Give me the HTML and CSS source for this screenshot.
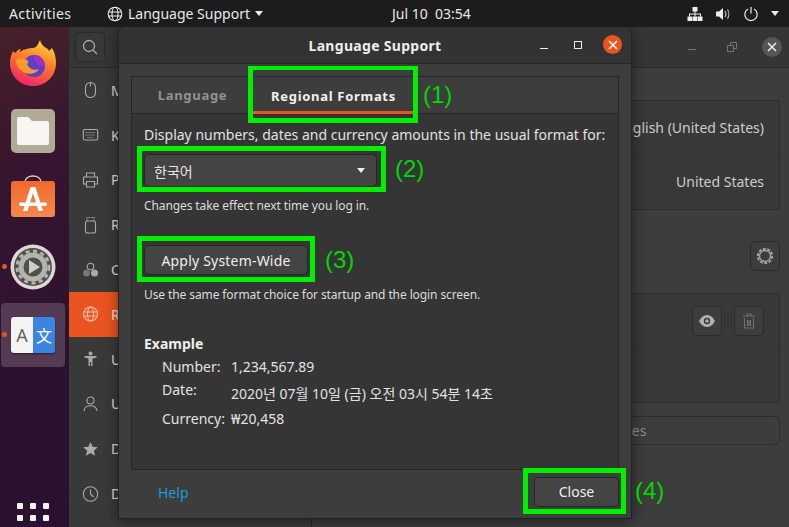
FILE: index.html
```html
<!DOCTYPE html>
<html>

<head>
    <meta charset="UTF-8">
    <title>Language Support</title>
    <link rel="stylesheet" href="styles.css">
</head>

<body>
    <header class="topbar">
        <span class="top-activities">Activities</span>
        <div class="top-app">
            <svg width="16" height="16" viewBox="0 0 16 16" fill="none" stroke="#eee" stroke-width="1.1">
                <circle cx="8" cy="8" r="6.8" />
                <ellipse cx="8" cy="8" rx="3" ry="6.8" />
                <path d="M1.400 6h13.200M1.400 10h13.200" />
            </svg>
            <span>Language Support</span>
            <i class="caret"></i>
        </div>
        <span class="top-clock">Jul 10&nbsp; 03:54</span>
        <div class="top-tray">
            <svg width="16" height="16" viewBox="0 0 16 16" fill="#eee">
                <path d="M5.500 1h5v4.500h-5zM0.500 10.500h4.500v4.500h-4.500zM5.500 10.500h5v4.500h-5zM11 10.500h4.500v4.500H11z" />
                <path d="M7.500 5h1v2.500h5.500v3h-1V8.500H8.500v2h-1v-2H3v2H2v-3h5.500z" />
            </svg>
            <svg width="16" height="16" viewBox="0 0 16 16" fill="#eee">
                <path d="M1 5.500h3L8 2v12L4 10.500H1z" />
                <path d="M10 5c1 1.600 1 4.400 0 6M12.500 3.500c1.700 2.500 1.700 6.500 0 9" fill="none" stroke="#bbb" stroke-width="1.200" />
            </svg>
            <svg width="16" height="16" viewBox="0 0 16 16" fill="none" stroke="#eee" stroke-width="1.200">
                <path d="M5 3a6.200 6.200 0 1 0 6 0M8 1v6.500" />
            </svg>
            <i class="caret"></i>
        </div>
    </header>

    <main class="desktop">
        <nav class="dock">
            <div class="dock-item">
                <svg width="46" height="46" viewBox="0 0 46 46">
                    <defs>
                        <linearGradient id="fox" x1="0.7" y1="0" x2="0.3" y2="1">
                            <stop offset="0" stop-color="#ffd53a" />
                            <stop offset="0.45" stop-color="#ff7a2a" />
                            <stop offset="1" stop-color="#f0206a" />
                        </linearGradient>
                    </defs>
                    <path d="M30 0c1 4 3 6 6 8 1 0 2 1 3 3 1-1 2-2 3-3 3 5 4 10 4 15 0 13-10 23-23 23S0 36 0 23c0-4 1-8 3-12l2 2c2-2 4-4 6-4-1 1-1 2-1 3 4-3 9-4 13-4 3 0 5-3 7-8z" fill="url(#fox)" />
                    <circle cx="24" cy="26" r="11" fill="#5a3fcb" />
                    <path d="M24 15c6 0 11 5 11 11h-7c0-3-2-5-4-5z" fill="#a32fc0" />
                    <path d="M6 20c3-3 7-2 11 0 2 1 2 3 0 4 2 5 7 7 12 5-4 6-12 6-17 2-4-3-6-7-6-11z" fill="#ff9a2a" />
                </svg>
            </div>
            <div class="dock-item">
                <div class="files-tile">
                    <svg width="34" height="34" viewBox="0 0 34 34">
                        <path d="M1 5a2 2 0 0 1 2-2h9l4 4h15a2 2 0 0 1 2 2v20a2 2 0 0 1-2 2H3a2 2 0 0 1-2-2z" fill="#f7f6f3" />
                    </svg>
                </div>
            </div>
            <div class="dock-item">
                <svg width="46" height="48" viewBox="0 0 46 48">
                    <defs>
                        <linearGradient id="bag" x1="0" y1="0" x2="0" y2="1">
                            <stop offset="0" stop-color="#f2682a" />
                            <stop offset="1" stop-color="#f58850" />
                        </linearGradient>
                    </defs>
                    <path d="M15 7c0-8 16-8 16 0" fill="none" stroke="#eec9a8" stroke-width="1.500" />
                    <rect x="1" y="6" width="44" height="36" rx="3" fill="url(#bag)" />
                    <path d="M20.500 12h5L33 36h-4.500l-5.500-18-5.500 18H13z" fill="#fff" />
                    <rect x="9" y="27.500" width="28" height="3.500" rx="1.700" fill="#fff" />
                </svg>
            </div>
            <div class="dock-item has-dot">
                <svg width="46" height="46" viewBox="0 0 46 46">
                    <circle cx="23" cy="23" r="22.500" fill="#ddd9d2" />
                    <circle cx="23" cy="23" r="19" fill="#504f4d" />
                    <circle cx="23" cy="23" r="12" fill="none" stroke="#b5b3ae" stroke-width="5" />
                    <circle cx="23" cy="23" r="16" fill="none" stroke="#b5b3ae" stroke-width="3" stroke-dasharray="4 3.500" />
                    <path d="M19 16l11 7-11 7z" fill="#cfcdc8" />
                </svg>
            </div>
            <div class="dock-item has-dot is-current">
                <div class="lang-tile">
                    <span class="lang-a">A</span>
                    <span class="lang-zh">文</span>
                </div>
            </div>
            <div class="dock-apps">
                <i></i><i></i><i></i><i></i><i></i><i></i>
            </div>
        </nav>

        <section class="settings">
            <aside class="side">
                <div class="side-head">
                    <button class="icon-btn">
                        <svg width="16" height="16" viewBox="0 0 16 16" fill="none" stroke="#aaa" stroke-width="1.300">
                            <circle cx="7" cy="7" r="5.500" />
                            <path d="M11 11l4 4" />
                        </svg>
                    </button>
                </div>
                <div class="side-row">
                    <svg class="side-icon" width="16" height="18" viewBox="0 0 16 18" fill="none" stroke="#aaa" stroke-width="1.100">
                        <rect x="3" y="1.500" width="10" height="15" rx="5" />
                        <path d="M8 1.500v4" />
                    </svg>
                    <span>Mouse &amp; Touchpad</span>
                </div>
                <div class="side-row">
                    <svg class="side-icon" width="16" height="14" viewBox="0 0 16 14" fill="none" stroke="#aaa" stroke-width="1.100">
                        <rect x="0.800" y="1.500" width="14.400" height="10.500" rx="1.500" />
                        <path d="M3 4.500h10M3 7h10M5 9.500h6" stroke-dasharray="1 1" />
                    </svg>
                    <span>Keyboard Shortcuts</span>
                </div>
                <div class="side-row">
                    <svg class="side-icon" width="16" height="16" viewBox="0 0 16 16" fill="none" stroke="#aaa" stroke-width="1.100">
                        <path d="M4 5V1h8v4M4 12H1V5h14v7h-3" />
                        <path d="M4 9.500h8V15H4z" />
                    </svg>
                    <span>Printers</span>
                </div>
                <div class="side-row">
                    <svg class="side-icon" width="16" height="18" viewBox="0 0 16 18" fill="none" stroke="#aaa" stroke-width="1.100">
                        <rect x="3" y="5" width="10" height="12" rx="2" />
                        <path d="M4.500 5V1.500h7V5" stroke-dasharray="1.500 1" />
                    </svg>
                    <span>Removable Media</span>
                </div>
                <div class="side-row">
                    <svg class="side-icon" width="16" height="16" viewBox="0 0 16 16" fill="#aaa">
                        <circle cx="8" cy="4.500" r="3.200" fill="none" stroke="#aaa" stroke-width="1.100" />
                        <circle cx="4" cy="11" r="3.500" fill="#777" />
                        <circle cx="12" cy="11" r="3.500" />
                    </svg>
                    <span>Color</span>
                </div>
                <div class="side-row is-active">
                    <svg class="side-icon" width="16" height="16" viewBox="0 0 16 16" fill="none" stroke="#f3c4ac" stroke-width="1.100">
                        <circle cx="8" cy="8" r="7" />
                        <ellipse cx="8" cy="8" rx="3" ry="7" />
                        <path d="M1.200 6h13.600M1.200 10h13.600" />
                    </svg>
                    <span>Region &amp; Language</span>
                </div>
                <div class="side-row">
                    <svg class="side-icon" width="16" height="16" viewBox="0 0 16 16" fill="#aaa">
                        <circle cx="8" cy="2.500" r="2" />
                        <path d="M2 5h12v1.500l-4 1V15H8.600v-4H7.400v4H6V7.500l-4-1z" />
                    </svg>
                    <span>Universal Access</span>
                </div>
                <div class="side-row">
                    <svg class="side-icon" width="16" height="16" viewBox="0 0 16 16" fill="none" stroke="#aaa" stroke-width="1.100">
                        <circle cx="8" cy="4.500" r="3.500" />
                        <path d="M1.500 15c0-7 13-7 13 0" />
                    </svg>
                    <span>Users</span>
                </div>
                <div class="side-row">
                    <svg class="side-icon" width="16" height="16" viewBox="0 0 16 16" fill="#aaa">
                        <path d="M8 1l2.100 4.800 5.200.5-3.900 3.400 1.200 5.100L8 12.100l-4.600 2.700 1.200-5.100L.7 6.300l5.200-.5z" />
                    </svg>
                    <span>Default Applications</span>
                </div>
                <div class="side-row">
                    <svg class="side-icon" width="16" height="16" viewBox="0 0 16 16" fill="none" stroke="#aaa" stroke-width="1.100">
                        <circle cx="8" cy="8" r="7.200" />
                        <path d="M8 3.500V8l3 3" />
                    </svg>
                    <span>Date &amp; Time</span>
                </div>
            </aside>

            <div class="pane">
                <div class="pane-head">
                    <span class="win-min"></span>
                    <svg width="10" height="10" viewBox="0 0 10 10" fill="none" stroke="#777">
                        <path d="M0.500 3.500h6v6h-6zM3.500 3.500v-3h6v6h-3" />
                    </svg>
                    <span class="win-close">
                        <svg width="10" height="10" viewBox="0 0 10 10" stroke="#eee" stroke-width="1.500">
                            <path d="M1 1l8 8M9 1l-8 8" />
                        </svg>
                    </span>
                </div>
                <div class="pane-body">
                    <div class="frame">
                        <div class="pane-row"><span>Language</span><span>English (United States)</span></div>
                        <div class="pane-row"><span>Formats</span><span>United States</span></div>
                    </div>
                    <div class="pane-tools">
                        <button class="icon-btn">
                            <svg width="18" height="18" viewBox="0 0 18 18" fill="none" stroke="#a8a8a8">
                                <circle cx="9" cy="9" r="5.500" stroke-width="1.300" />
                                <circle cx="9" cy="9" r="7.200" stroke-width="1.800" stroke-dasharray="3 1.500" />
                            </svg>
                        </button>
                    </div>
                    <div class="frame">
                        <div class="pane-row input-row">
                            <span>Input Sources</span>
                            <div class="input-btns">
                                <button class="icon-btn">
                                    <svg width="16" height="12" viewBox="0 0 16 12">
                                        <path d="M0 6c4-8 12-8 16 0-4 8-12 8-16 0z" fill="#b0b0b0" />
                                        <circle cx="8" cy="6" r="3.200" fill="#3a3a3a" />
                                        <circle cx="8" cy="6" r="1.800" fill="#b0b0b0" />
                                    </svg>
                                </button>
                                <button class="icon-btn">
                                    <svg width="14" height="16" viewBox="0 0 14 16" fill="none" stroke="#707070" stroke-width="1.100">
                                        <path d="M1 3h12M5 3V1h4v2M2.500 5v10h9V5M5.500 7v6M7 7v6M8.500 7v6" />
                                    </svg>
                                </button>
                            </div>
                        </div>
                        <div class="pane-row empty-row"></div>
                    </div>
                    <div class="manage">Manage Installed Languages</div>
                </div>
            </div>
        </section>

        <section class="dialog">
            <div class="dlg-title">
                <span class="dlg-name">Language Support</span>
                <div class="dlg-btns">
                    <span class="dlg-min"></span>
                    <span class="dlg-max"></span>
                    <span class="dlg-close">
                        <svg width="10" height="10" viewBox="0 0 10 10" stroke="#fff" stroke-width="1.500">
                            <path d="M1 1l8 8M9 1l-8 8" />
                        </svg>
                    </span>
                </div>
            </div>
            <div class="notebook">
                <div class="tabs">
                    <div class="tab">Language</div>
                    <div class="tab tab-on">Regional Formats</div>
                </div>
                <div class="tab-body">
                    <p class="lead">Display numbers, dates and currency amounts in the usual format for:</p>
                    <div class="combo"><span>한국어</span><i class="caret"></i></div>
                    <p class="hint">Changes take effect next time you log in.</p>
                    <button class="btn btn-apply">Apply System-Wide</button>
                    <p class="hint hint-apply">Use the same format choice for startup and the login screen.</p>
                    <h4 class="ex-title">Example</h4>
                    <div class="ex-grid">
                        <span>Number:</span><span>1,234,567.89</span>
                        <span>Date:</span><span class="ex-date">2020년 07월 10일 (금) 오전 03시 54분 14초</span>
                        <span>Currency:</span><span>₩20,458</span>
                    </div>
                </div>
            </div>
            <div class="dlg-foot">
                <a class="help">Help</a>
                <button class="btn btn-close">Close</button>
            </div>
        </section>

        <div class="mark mark-1"></div>
        <div class="mark mark-2"></div>
        <div class="mark mark-3"></div>
        <div class="mark mark-4"></div>
        <span class="mark-no no-1">(1)</span>
        <span class="mark-no no-2">(2)</span>
        <span class="mark-no no-3">(3)</span>
        <span class="mark-no no-4">(4)</span>
    </main>
</body>

</html>
```
FILE: styles.css
```css
* {
    box-sizing: border-box;
}

html,
body {
    margin: 0;
    height: 527px;
    overflow: hidden;
}

body {
    background-color: #2c1230;
    color: #e6e6e6;
    font-family: "Noto Sans", "Noto Sans CJK KR", sans-serif;
    font-size: 14px;
}

p,
h4 {
    margin: 0;
}

button {
    font-family: inherit;
    padding: 0;
}

.caret {
    display: inline-block;
    width: 0;
    height: 0;
    border-left: 4.5px solid transparent;
    border-right: 4.5px solid transparent;
    border-top: 5px solid #eee;
}

/* top bar */
.topbar {
    height: 27px;
    background-color: #1c1c1c;
    display: flex;
    align-items: center;
    position: relative;
    padding: 0 10px 0 9px;
    color: #e8e8e8;
}

.top-activities {
    width: 98px;
    letter-spacing: 0.4px;
}

.top-app {
    display: flex;
    align-items: center;
    gap: 5px;
}

.top-clock {
    position: absolute;
    left: 392px;
}

.top-tray {
    margin-left: auto;
    display: flex;
    align-items: center;
    gap: 12px;
}

/* desktop */
.desktop {
    position: relative;
    height: 500px;
    display: flex;
    overflow: hidden;
}

.dock {
    width: 69px;
    flex: none;
    background: linear-gradient(160deg, #47202b 0, #35152f 30%, #2b1230 70%, #2a1130 100%);
    display: flex;
    flex-direction: column;
    align-items: center;
    padding: 2px 4px 0 1px;
}

.dock-item {
    width: 64px;
    height: 64px;
    margin: 2px 0;
    display: flex;
    align-items: center;
    justify-content: center;
    position: relative;
    border-radius: 4px;
}

.has-dot::before {
    content: "";
    position: absolute;
    left: 1px;
    top: 29px;
    width: 5px;
    height: 5px;
    border-radius: 50%;
    background-color: #e95420;
}

.is-current {
    background-color: #543b53;
}

.files-tile {
    width: 44px;
    height: 44px;
    border-radius: 5px;
    background-color: #b0aa97;
    display: flex;
    align-items: center;
    justify-content: center;
}

.lang-tile {
    width: 44px;
    height: 36px;
    border-radius: 3px;
    overflow: hidden;
    display: flex;
    box-shadow: 0 1px 2px #0008;
}

.lang-a,
.lang-zh {
    width: 22px;
    display: flex;
    align-items: center;
    justify-content: center;
}

.lang-a {
    background-color: #f5f4f1;
    color: #666;
    font-size: 18px;
}

.lang-zh {
    background-color: #3a85e0;
    color: #fff;
    font-size: 16px;
    font-family: "Noto Sans CJK SC", sans-serif;
}

.dock-apps {
    margin-top: 134px;
    display: grid;
    grid-template-columns: repeat(3, 6px);
    gap: 6px 7px;
}

.dock-apps i {
    width: 6px;
    height: 6px;
    border-radius: 1px;
    background-color: #f4f2f2;
}

/* settings window, mostly under the dialog */
.settings {
    flex: 1;
    display: flex;
    background-color: #3d3d3d;
    min-width: 0;
}

.side {
    width: 243px;
    flex: none;
    background-color: #393939;
    border-right: 1px solid #2a2a2a;
}

.side-head {
    height: 41px;
    padding: 5px 6px;
    border-bottom: 1px solid #2b2b2b;
    background-color: #353535;
}

.icon-btn {
    width: 30px;
    height: 30px;
    border: 1px solid #2a2a2a;
    border-radius: 5px;
    background-color: #3d3d3d;
    display: flex;
    align-items: center;
    justify-content: center;
}

.side-head .icon-btn {
    background-color: #383838;
}

.side-row {
    height: 44.8px;
    display: flex;
    align-items: center;
    color: #ddd;
}

.side-icon {
    flex: none;
    margin: 0 11px 0 12px;
    width: 19px;
}

.side-row span {
    white-space: nowrap;
}

.is-active {
    background-color: #e95420;
    color: #f6e0d5;
}

.pane {
    flex: 1;
    min-width: 0;
    display: flex;
    flex-direction: column;
}

.pane-head {
    height: 41px;
    background-color: #353535;
    border-bottom: 1px solid #2b2b2b;
    display: flex;
    align-items: center;
    justify-content: flex-end;
    padding-right: 7px;
    gap: 31px;
}

.win-min {
    width: 8px;
    height: 1px;
    margin-top: 5px;
    background-color: #777;
}

.win-close {
    width: 20px;
    height: 20px;
    margin-left: -6px;
    border-radius: 50%;
    background-color: #555;
    display: flex;
    align-items: center;
    justify-content: center;
}

.pane-body {
    padding: 32px 9px 0 19px;
    color: #ccc;
}

.frame {
    border: 1px solid #2d2d2d;
    background-color: #383838;
}

.pane-row {
    height: 54px;
    padding: 0 15px 2px;
    display: flex;
    align-items: center;
    justify-content: space-between;
}

.pane-row + .pane-row {
    border-top: 1px solid #333;
}

.pane-tools {
    display: flex;
    justify-content: flex-end;
    margin: 31px 0 22px;
}

.input-row {
    padding-bottom: 0;
}

.input-btns {
    display: flex;
    gap: 12px;
}

.manage {
    margin-top: 13px;
    height: 29px;
    line-height: 27px;
    padding-right: 8px;
    text-align: center;
    border: 1px solid #2d2d2d;
    border-radius: 5px;
    color: #8c8c8c;
}

/* dialog */
.dialog {
    position: absolute;
    left: 118px;
    top: 0;
    width: 514px;
    height: 492px;
    background-color: #3d3d3d;
    border: 1px solid #232323;
    border-top: none;
    border-radius: 8px 8px 0 0;
    display: flex;
    flex-direction: column;
    box-shadow: 0 2px 14px #0007;
}

.dlg-title {
    height: 37px;
    flex: none;
    background-color: #333;
    border-bottom: 1px solid #262626;
    border-radius: 8px 8px 0 0;
    display: flex;
    align-items: center;
    justify-content: center;
    position: relative;
}

.dlg-name {
    font-weight: 700;
    font-size: 14px;
    color: #eee;
    letter-spacing: 0.3px;
}

.dlg-btns {
    position: absolute;
    right: 9px;
    top: 8px;
    display: flex;
    align-items: center;
    gap: 26px;
}

.dlg-min {
    width: 8px;
    height: 1px;
    margin-top: 7px;
    background-color: #eee;
}

.dlg-max {
    width: 8px;
    height: 8px;
    border: 1px solid #eee;
}

.dlg-close {
    width: 19px;
    height: 19px;
    margin-left: -5px;
    border-radius: 50%;
    background-color: #e95420;
    display: flex;
    align-items: center;
    justify-content: center;
}

.notebook {
    margin: 12px 12px 0 12px;
    height: 394px;
    flex: none;
    border: 1px solid #262626;
    background-color: #353535;
    display: flex;
    flex-direction: column;
}

.tabs {
    height: 37px;
    flex: none;
    background-color: #3d3d3d;
    border-bottom: 1px solid #262626;
    display: flex;
}

.tab {
    width: 121px;
    justify-content: center;
    display: flex;
    align-items: center;
    font-weight: 700;
    font-size: 13px;
    color: #929292;
    letter-spacing: 0.7px;
}

.tab-on {
    width: 161px;
    color: #f0f0f0;
    border-bottom: 3px solid #e95420;
    padding-top: 3px;
    height: 37px;
}

.tab-body {
    padding: 11px 12px 0;
    flex: 1;
}

.lead {
    font-size: 14px;
    line-height: 20px;
    white-space: nowrap;
    color: #e2e2e2;
}

.combo {
    margin-top: 9px;
    width: 233px;
    height: 33px;
    padding: 0 11px 0 9px;
    border: 1px solid #262626;
    border-radius: 5px;
    background-color: #444;
    display: flex;
    align-items: center;
    justify-content: space-between;
}

.hint {
    margin-top: 11px;
    font-size: 12px;
    line-height: 16px;
    letter-spacing: -0.1px;
    color: #dcdcdc;
}

.btn {
    border: 1px solid #262626;
    border-radius: 5px;
    background-color: #444;
    color: #eee;
    font-size: 14px;
    height: 30px;
}

.btn-apply {
    display: block;
    width: 164px;
    margin-top: 31px;
    letter-spacing: 0.2px;
}

.hint-apply {
    margin-top: 12px;
}

.ex-title {
    margin-top: 31px;
    font-size: 14px;
    line-height: 20px;
    font-weight: 700;
    color: #eee;
}

.ex-grid {
    margin: 3px 0 0 18px;
    display: grid;
    grid-template-columns: 69px 1fr;
    grid-template-rows: 23px 29px 25px;
    font-size: 14px;
    line-height: 20px;
    color: #e2e2e2;
    white-space: nowrap;
}

.ex-date {
    padding-top: 4px;
}

.dlg-foot {
    flex: 1;
    display: flex;
    align-items: center;
    justify-content: space-between;
    padding: 0 12px 4px 39px;
}

.help {
    color: #1f9ad6;
    font-size: 14px;
}

.btn-close {
    width: 85px;
    padding-bottom: 2px;
}

/* green call-outs drawn on the screenshot */
.mark {
    position: absolute;
    border: 5px solid #00f000;
}

.mark-1 {
    left: 248px;
    top: 39px;
    width: 170px;
    height: 57px;
    border-top-width: 4px;
}

.mark-2 {
    left: 137px;
    top: 119px;
    width: 249px;
    height: 46px;
}

.mark-3 {
    left: 137px;
    top: 209px;
    width: 178px;
    height: 46px;
}

.mark-4 {
    left: 523px;
    top: 441px;
    width: 103px;
    height: 46px;
}

.mark-no {
    position: absolute;
    font-family: "Liberation Sans", sans-serif;
    font-size: 24px;
    line-height: 28px;
    color: #00d800;
}

.no-1 {
    left: 423px;
    top: 54px;
}

.no-2 {
    left: 395px;
    top: 128px;
}

.no-3 {
    left: 325px;
    top: 219px;
}

.no-4 {
    left: 635px;
    top: 450px;
}
```
